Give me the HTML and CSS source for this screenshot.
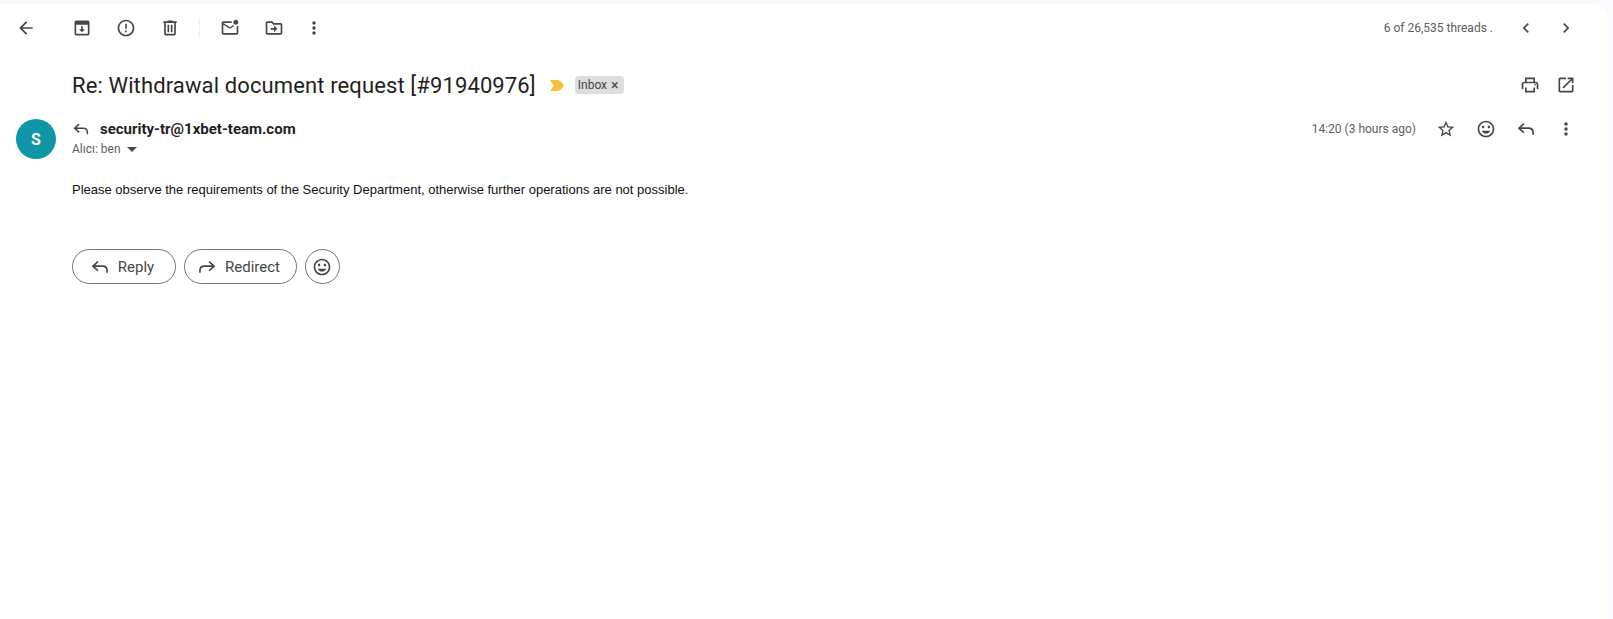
FILE: index.html
```html
<!DOCTYPE html>
<html lang="en">
<head>
<meta charset="UTF-8" />
<meta name="viewport" content="width=device-width, initial-scale=1" />
<title>Re: Withdrawal document request</title>
<link rel="stylesheet" href="styles.css">
</head>
<body>

<svg class="sprite" aria-hidden="true">
  <symbol id="i-more" viewBox="0 0 24 24"><path d="M12 8c1.1 0 2-.9 2-2s-.9-2-2-2-2 .9-2 2 .9 2 2 2zm0 2c-1.1 0-2 .9-2 2s.9 2 2 2 2-.9 2-2-.9-2-2-2zm0 6c-1.1 0-2 .9-2 2s.9 2 2 2 2-.9 2-2-.9-2-2-2z"/></symbol>
  <symbol id="i-mood" viewBox="0 0 24 24"><path d="M11.99 2C6.47 2 2 6.48 2 12s4.47 10 9.99 10C17.52 22 22 17.52 22 12S17.52 2 11.99 2zM12 20c-4.42 0-8-3.58-8-8s3.58-8 8-8 8 3.58 8 8-3.58 8-8 8zm3.5-9c.83 0 1.5-.67 1.5-1.5S16.33 8 15.5 8 14 8.67 14 9.5s.67 1.5 1.5 1.5zm-7 0c.83 0 1.5-.67 1.5-1.5S9.33 8 8.5 8 7 8.67 7 9.5 7.67 11 8.5 11zm3.5 6.5c2.33 0 4.31-1.46 5.11-3.5H6.89c.8 2.04 2.78 3.5 5.11 3.5z"/></symbol>
  <symbol id="i-reply" viewBox="0 0 24 24"><path fill="none" stroke="currentColor" stroke-width="2" d="M9.5 5.5 3.5 11l6 5.5M3.5 11H15c3.3 0 5.5 2.2 5.5 5.5V19"/></symbol>
  <symbol id="i-forward" viewBox="0 0 24 24"><path fill="none" stroke="currentColor" stroke-width="2" d="M14.5 5.5l6 5.5-6 5.5M20.5 11H9c-3.3 0-5.5 2.2-5.5 5.5V19"/></symbol>
</svg>

<div class="panel">

  <!-- Barra de acciones -->
  <div class="toolbar">
    <button class="icon-btn back" aria-label="Back"><svg viewBox="0 0 24 24"><path d="M20 11H7.83l5.59-5.59L12 4l-8 8 8 8 1.41-1.41L7.83 13H20v-2z"/></svg></button>
    <div class="tool-group">
      <button class="icon-btn" aria-label="Archive"><svg viewBox="0 0 24 24"><path fill-rule="evenodd" d="M5 3h14a2 2 0 0 1 2 2v14a2 2 0 0 1-2 2H5a2 2 0 0 1-2-2V5a2 2 0 0 1 2-2zm0 5v11h14V8H5z"/><path d="M11 10h2v3.500h2.500L12 17l-3.500-3.500H11z"/></svg></button>
      <button class="icon-btn" aria-label="Report spam"><svg viewBox="0 0 24 24"><path d="M11 15h2v2h-2zm0-8h2v6h-2zm.99-5C6.47 2 2 6.48 2 12s4.47 10 9.99 10C17.52 22 22 17.52 22 12S17.52 2 11.99 2zM12 20c-4.42 0-8-3.58-8-8s3.58-8 8-8 8 3.58 8 8-3.58 8-8 8z"/></svg></button>
      <button class="icon-btn" aria-label="Delete"><svg viewBox="0 0 24 24"><path d="M15 4V3H9v1H4v2h1v13c0 1.100.9 2 2 2h10c1.100 0 2-.9 2-2V6h1V4h-5zm2 15H7V6h10v13zM9 8h2v9H9zm4 0h2v9h-2z"/></svg></button>
    </div>
    <span class="tool-divider"></span>
    <div class="tool-group">
      <button class="icon-btn" aria-label="Mark as unread"><svg viewBox="0 0 24 24"><path d="M22 8.980V18c0 1.100-.9 2-2 2H4c-1.100 0-2-.9-2-2V6c0-1.100.9-2 2-2h10.100c-.06.32-.1.66-.1 1s.04.68.1 1H4l8 5 3.670-2.290c.47.43 1.020.76 1.630.98L12 13 4 8v10h16V9.900c.74-.15 1.420-.48 2-.92zM16 5c0 1.660 1.340 3 3 3s3-1.340 3-3-1.340-3-3-3-3 1.340-3 3z"/></svg></button>
      <button class="icon-btn" aria-label="Move to"><svg viewBox="0 0 24 24"><path d="M20 6h-8l-2-2H4c-1.100 0-1.990.9-1.990 2L2 18c0 1.100.9 2 2 2h16c1.100 0 2-.9 2-2V8c0-1.100-.9-2-2-2zm0 12H4V6h5.170l2 2H20v10zm-8-4H8v-2h4V9l4 4-4 4v-3z"/></svg></button>
      <button class="icon-btn narrow" aria-label="More"><svg><use href="#i-more"/></svg></button>
    </div>
    <div class="pager">
      <span class="pager-text">6 of 26,535 threads .</span>
      <button class="icon-btn" aria-label="Newer"><svg viewBox="0 0 24 24"><path d="M15.410 7.410 14 6l-6 6 6 6 1.410-1.410L10.830 12z"/></svg></button>
      <button class="icon-btn" aria-label="Older"><svg viewBox="0 0 24 24"><path d="M10 6 8.590 7.410 13.170 12l-4.580 4.590L10 18l6-6z"/></svg></button>
    </div>
  </div>

  <!-- Asunto -->
  <div class="subject-row">
    <h1 class="subject">Re: Withdrawal document request [#91940976]</h1>
    <svg class="marker" viewBox="0 0 14 11"><path d="M0 0h7.500C10 0 12 2.500 14 5.500 12 8.500 10 11 7.500 11H0l3.500-5.500z"/></svg>
    <span class="chip">Inbox <span class="chip-x">×</span></span>
    <div class="subject-actions">
      <button class="icon-btn print" aria-label="Print"><svg viewBox="0 0 24 24"><path d="M19 8h-1V3H6v5H5c-1.660 0-3 1.340-3 3v6h4v4h12v-4h4v-6c0-1.660-1.340-3-3-3zM8 5h8v3H8V5zm8 14H8v-4h8v4zm2-2v-2H6v2H4v-6c0-.55.45-1 1-1h14c.55 0 1 .45 1 1v6h-2z"/><circle cx="18" cy="11.500" r="1"/></svg></button>
      <button class="icon-btn" aria-label="Open in new window"><svg viewBox="0 0 24 24"><path d="M19 19H5V5h7V3H5c-1.110 0-2 .9-2 2v14c0 1.100.89 2 2 2h14c1.100 0 2-.9 2-2v-7h-2v7zM14 3v2h3.590l-9.830 9.830 1.410 1.410L19 6.410V10h2V3h-7z"/></svg></button>
    </div>
  </div>

  <!-- Mensaje -->
  <div class="message">
    <div class="avatar">S</div>
    <div class="message-main">
      <div class="message-head">
        <div class="sender-block">
          <div class="sender">
            <svg class="sender-reply"><use href="#i-reply"/></svg>
            <span class="sender-name">security-tr@1xbet-team.com</span>
          </div>
          <div class="recipient">Alıcı: ben <span class="caret"></span></div>
        </div>
        <div class="message-meta">
          <span class="message-time">14:20 (3 hours ago)</span>
          <button class="icon-btn" aria-label="Star"><svg viewBox="0 0 24 24"><path d="M22 9.240l-7.190-.62L12 2 9.190 8.630 2 9.240l5.460 4.730L5.820 21 12 17.270 18.180 21l-1.630-7.030L22 9.240zM12 15.400l-3.760 2.270 1-4.280-3.320-2.880 4.380-.38L12 6.100l1.710 4.040 4.380.38-3.320 2.880 1 4.280L12 15.400z"/></svg></button>
          <button class="icon-btn" aria-label="React"><svg><use href="#i-mood"/></svg></button>
          <button class="icon-btn" aria-label="Reply"><svg><use href="#i-reply"/></svg></button>
          <button class="icon-btn" aria-label="More"><svg><use href="#i-more"/></svg></button>
        </div>
      </div>
      <p class="message-body">Please observe the requirements of the Security Department, otherwise further operations are not possible.</p>
      <div class="message-actions">
        <button class="pill"><svg><use href="#i-reply"/></svg>Reply</button>
        <button class="pill"><svg><use href="#i-forward"/></svg>Redirect</button>
        <button class="pill round" aria-label="React"><svg><use href="#i-mood"/></svg></button>
      </div>
    </div>
  </div>

</div>

</body>
</html>
```

FILE: styles.css
```css
/* Reset */
* {
  margin: 0; padding: 0; box-sizing: border-box;
}
html, body {
  height: 100%;
  overflow: hidden;
}
body {
  background: #f8f9fd;
  padding: 4px 5px 0 0;
  font-family: Roboto, "Liberation Sans", sans-serif;
  color: #1f1f1f;
}
.sprite {
  display: none;
}

.panel {
  height: 100%;
  background: white;
  border-radius: 0 16px 0 0;
}

/* Botones con icono */
.icon-btn {
  width: 40px;
  height: 40px;
  display: flex;
  justify-content: center;
  align-items: center;
  flex: none;
  background: none;
  border: none;
  color: #444746;
  cursor: pointer;
}
.icon-btn svg {
  width: 20px;
  height: 20px;
  fill: currentColor;
}

/* Barra de acciones */
.toolbar {
  height: 48px;
  display: flex;
  align-items: center;
  padding-left: 6px;
}
.back {
  margin-right: 16px;
}
.tool-group {
  display: flex;
  gap: 4px;
}
.tool-divider {
  width: 1px;
  height: 20px;
  background: #eceff1;
  margin: 0 10px 0 9px;
}
.icon-btn.narrow {
  margin-left: -4px;
}
.pager {
  margin-left: auto;
  display: flex;
  align-items: center;
  padding-right: 22px;
}
.pager-text {
  font-size: 12px;
  color: #5e5e5e;
  margin-right: 13px;
}

/* Asunto */
.subject-row {
  height: 38px;
  margin-top: 14px;
  display: flex;
  align-items: center;
  padding: 0 22px 0 72px;
}
.subject {
  font-size: 22px;
  font-weight: 400;
  letter-spacing: 0.12px;
  color: #1f1f1f;
}
.marker {
  width: 14px;
  height: 11px;
  margin-left: 14px;
  fill: #f4c13d;
}
.chip {
  margin-left: 11px;
  height: 18px;
  padding: 0 5px 0 3px;
  display: flex;
  align-items: center;
  gap: 4px;
  background: #dddddd;
  border-radius: 4px;
  font-size: 12px;
  color: #444746;
}
.chip-x {
  font-size: 14px;
  line-height: 1;
}
.subject-actions {
  margin-left: auto;
  display: flex;
}
.print {
  margin-right: -4px;
}

/* Mensaje */
.message {
  margin-top: 15px;
  padding: 0 22px 0 16px;
  display: flex;
  gap: 16px;
}
.avatar {
  width: 40px;
  height: 40px;
  flex: none;
  border-radius: 50%;
  background: #0e96a6;
  color: white;
  font-size: 16px;
  font-weight: 700;
  display: flex;
  justify-content: center;
  align-items: center;
}
.message-main {
  flex: 1;
}
.message-head {
  display: flex;
  justify-content: space-between;
}
.sender {
  display: flex;
  align-items: center;
  gap: 10px;
  height: 20px;
}
.sender-reply {
  width: 18px;
  height: 18px;
  color: #444746;
}
.sender-name {
  font-size: 15px;
  font-weight: 700;
  color: #1f1f1f;
}
.recipient {
  margin-top: 3px;
  font-size: 12px;
  color: #5e5e5e;
  display: flex;
  align-items: center;
  gap: 6px;
}
.caret {
  width: 0;
  height: 0;
  border-left: 5px solid transparent;
  border-right: 5px solid transparent;
  border-top: 5px solid #444746;
}
.message-meta {
  display: flex;
  align-items: center;
  height: 20px;
}
.message-time {
  font-size: 12px;
  color: #5e5e5e;
  margin-right: 10px;
}
.message-body {
  margin-top: 25px;
  font-family: "Liberation Sans", Arial, sans-serif;
  font-size: 13px;
  line-height: 18px;
  color: #111;
}

/* Botones de respuesta */
.message-actions {
  margin-top: 50px;
  display: flex;
  gap: 8px;
}
.pill {
  height: 35px;
  min-width: 104px;
  padding: 0 16px 0 12px;
  display: flex;
  justify-content: center;
  align-items: center;
  gap: 8px;
  background: white;
  border: 1px solid #747775;
  border-radius: 18px;
  font-family: Roboto, sans-serif;
  font-size: 15px;
  font-weight: 400;
  color: #444746;
  cursor: pointer;
}
.pill svg {
  width: 20px;
  height: 20px;
  color: #444746;
  fill: currentColor;
}
.pill.round {
  width: 35px;
  min-width: 0;
  padding: 0;
}
```
